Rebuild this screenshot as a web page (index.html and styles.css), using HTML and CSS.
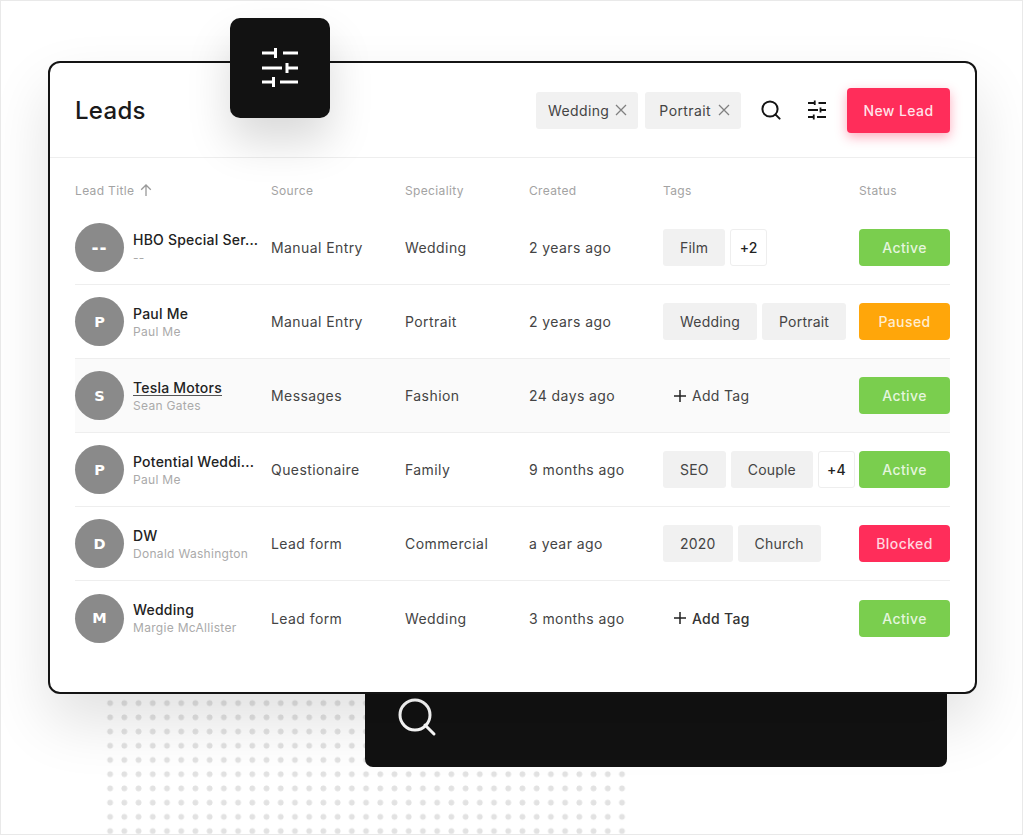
FILE: index.html
```html
<!DOCTYPE html>
<html lang="en">
<head>
  <meta charset="UTF-8" />
  <title>Leads</title>
  <link rel="stylesheet" href="styles.css">
</head>
<body>
  <div class="stage">
    <div class="dots"></div>
    <div class="search-bar">
      <svg width="40" height="40" viewBox="0 0 40 40" fill="none" stroke="#fff" stroke-width="3" stroke-linecap="round"><circle cx="17" cy="17" r="15"/><path d="M27 27l9 9"/></svg>
    </div>

    <div class="card">
      <header class="card-head">
        <h1>Leads</h1>
        <span class="chip">Wedding <svg width="12" height="12" viewBox="0 0 12 12" stroke="#808080" stroke-width="1.3"><path d="M1 1l10 10M11 1L1 11"/></svg></span>
        <span class="chip wide">Portrait <svg width="12" height="12" viewBox="0 0 12 12" stroke="#808080" stroke-width="1.3"><path d="M1 1l10 10M11 1L1 11"/></svg></span>
        <svg class="icon-search" width="20" height="20" viewBox="0 0 20 20" fill="none" stroke="#141414" stroke-width="2" stroke-linecap="round"><circle cx="9" cy="9" r="7.6"/><path d="M14.6 14.6l4 4"/></svg>
        <svg class="icon-filter" width="20" height="20" viewBox="0 0 40 40" fill="none" stroke="#141414" stroke-width="3.6"><path d="M2 6h13M23 6h15M2 20h20M27 20h11M2 34h11M20 34h18"/><path d="M15.500 1v9M27 15v10M13.500 29v10"/></svg>
        <button class="new-lead">New Lead</button>
      </header>

      <div class="table">
        <div class="row head">
          <div>Lead Title <svg class="sort" width="12" height="12" viewBox="0 0 12 12" fill="none" stroke="#999" stroke-width="1.3"><path d="M6 12V1M1.2 5.800L6 1l4.800 4.800"/></svg></div>
          <div>Source</div><div>Speciality</div><div>Created</div><div>Tags</div><div>Status</div>
        </div>

        <div class="row">
          <div class="lead"><span class="avatar dashes">--</span><div><div class="name">HBO Special Ser...</div><div class="sub">--</div></div></div>
          <div>Manual Entry</div><div>Wedding</div><div>2 years ago</div>
          <div class="tags"><span class="tag">Film</span><span class="more">+2</span></div>
          <div class="status active">Active</div>
        </div>

        <div class="row">
          <div class="lead"><span class="avatar">P</span><div><div class="name">Paul Me</div><div class="sub">Paul Me</div></div></div>
          <div>Manual Entry</div><div>Portrait</div><div>2 years ago</div>
          <div class="tags"><span class="tag">Wedding</span><span class="tag">Portrait</span></div>
          <div class="status paused">Paused</div>
        </div>

        <div class="row hovered">
          <div class="lead"><span class="avatar">S</span><div><div class="name linked">Tesla Motors</div><div class="sub">Sean Gates</div></div></div>
          <div>Messages</div><div>Fashion</div><div>24 days ago</div>
          <div class="tags"><span class="add-tag"><svg width="12" height="12" viewBox="0 0 12 12" stroke="#222" stroke-width="1.5"><path d="M6 0v12M0 6h12"/></svg>Add Tag</span></div>
          <div class="status active">Active</div>
        </div>

        <div class="row">
          <div class="lead"><span class="avatar">P</span><div><div class="name">Potential Weddi...</div><div class="sub">Paul Me</div></div></div>
          <div>Questionaire</div><div>Family</div><div>9 months ago</div>
          <div class="tags"><span class="tag">SEO</span><span class="tag">Couple</span><span class="more">+4</span></div>
          <div class="status active">Active</div>
        </div>

        <div class="row">
          <div class="lead"><span class="avatar">D</span><div><div class="name">DW</div><div class="sub">Donald Washington</div></div></div>
          <div>Lead form</div><div>Commercial</div><div>a year ago</div>
          <div class="tags"><span class="tag">2020</span><span class="tag">Church</span></div>
          <div class="status blocked">Blocked</div>
        </div>

        <div class="row last">
          <div class="lead"><span class="avatar">M</span><div><div class="name">Wedding</div><div class="sub">Margie McAllister</div></div></div>
          <div>Lead form</div><div>Wedding</div><div>3 months ago</div>
          <div class="tags"><span class="add-tag strong"><svg width="12" height="12" viewBox="0 0 12 12" stroke="#222" stroke-width="1.5"><path d="M6 0v12M0 6h12"/></svg>Add Tag</span></div>
          <div class="status active">Active</div>
        </div>
      </div>
    </div>

    <div class="tile">
      <svg width="40" height="40" viewBox="0 0 40 40" fill="none" stroke="#fff" stroke-width="3"><path d="M2 5h13M23 5h15M2 20h20M27 20h11M2 34h11M20 34h18"/><path d="M15.500 0v10M27 15v10M13.500 29v10"/></svg>
    </div>
  </div>
</body>
</html>
```

FILE: styles.css
```css
* {
  box-sizing: border-box;
}
body {
  margin: 0;
  background: #fff;
  font-family: Inter, 'Open Sans', sans-serif;
  font-size: 14px;
  letter-spacing: 0.42px;
  color: #444;
}
.stage {
  position: relative;
  width: 1023px;
  height: 835px;
  padding: 60px 0 0 47px;
  border: 1px solid #e9e9e9;
  overflow: hidden;
}
.dots {
  position: absolute;
  left: 102px;
  top: 695px;
  width: 526px;
  height: 140px;
  background-image: radial-gradient(circle, #e2e2e2 2.6px, transparent 3.2px);
  background-size: 14.22px 14.22px;
}
.search-bar {
  position: absolute;
  left: 364px;
  top: 680px;
  width: 582px;
  height: 86px;
  padding: 17px 0 0 33px;
  background: #121212;
  border-radius: 0 0 8px 8px;
}
.card {
  position: relative;
  width: 929px;
  height: 633px;
  background: #fff;
  border: 2px solid #141414;
  border-radius: 12px;
  box-shadow: 0 28px 60px rgba(0, 0, 0, 0.12);
}
.tile {
  position: absolute;
  left: 229px;
  top: 17px;
  width: 100px;
  height: 100px;
  display: flex;
  align-items: center;
  justify-content: center;
  background: #121212;
  border-radius: 10px;
  box-shadow: 0 24px 44px rgba(0, 0, 0, 0.15);
}
.card-head {
  display: flex;
  align-items: center;
  height: 95px;
  padding: 0 25px;
  border-bottom: 1px solid #eee;
}
.card-head h1 {
  margin: 0 auto 0 0;
  font-size: 24px;
  font-weight: 500;
  letter-spacing: 0.3px;
  color: #1a1a1a;
}
.chip {
  display: flex;
  align-items: center;
  gap: 6px;
  height: 37px;
  margin-left: 7px;
  padding: 0 11px 0 12px;
  background: #f1f1f1;
  border-radius: 3px;
  letter-spacing: 0.4px;
}
.chip.wide {
  gap: 7px;
  padding-left: 14px;
}
.icon-search {
  margin-left: 20px;
}
.icon-filter {
  margin-left: 26px;
}
.new-lead {
  width: 103px;
  height: 45px;
  margin-left: 20px;
  border: 0;
  border-radius: 4px;
  background: #ff2d5a;
  color: rgba(255, 255, 255, 0.88);
  font: inherit;
  letter-spacing: inherit;
  font-weight: 500;
  box-shadow: 0 4px 12px rgba(255, 45, 90, 0.4);
}
.table {
  padding: 0 25px;
}
.row {
  display: grid;
  grid-template-columns: 196px 134px 124px 134px 196px 91px;
  align-items: center;
  height: 74px;
  border-bottom: 1px solid #eee;
}
.row.head {
  align-items: end;
  height: 53px;
  padding-bottom: 13px;
  border: 0;
  font-size: 12px;
  letter-spacing: 0.35px;
  color: #a3a3a3;
}
.row.hovered {
  background: #fafafa;
}
.row.last {
  border: 0;
}
.sort {
  margin-left: 2px;
  vertical-align: -1px;
}
.lead {
  display: flex;
  align-items: center;
  gap: 9px;
}
.avatar {
  flex: none;
  display: flex;
  align-items: center;
  justify-content: center;
  width: 49px;
  height: 49px;
  border-radius: 50%;
  background: #8a8a8a;
  color: #fff;
  font-family: 'DejaVu Sans', sans-serif;
  font-size: 14.5px;
  font-weight: 700;
  letter-spacing: 0;
}
.avatar.dashes {
  font-size: 17px;
  letter-spacing: 1px;
}
.name {
  font-weight: 500;
  letter-spacing: 0.22px;
  color: #222;
  white-space: nowrap;
}
.name.linked {
  display: inline-block;
  border-bottom: 1px solid #555;
  line-height: 15px;
}
.sub {
  margin-top: 2px;
  font-size: 12px;
  letter-spacing: 0.3px;
  color: #aaa;
}
.tags {
  display: flex;
  gap: 5px;
}
.tag, .more {
  display: flex;
  align-items: center;
  height: 37px;
  border-radius: 3px;
  letter-spacing: 0.2px;
}
.tag {
  padding: 0 17px;
  background: #f1f1f1;
}
.more {
  justify-content: center;
  width: 37px;
  border: 1px solid #eee;
  background: #fff;
  font-weight: 500;
  color: #222;
}
.add-tag {
  display: flex;
  align-items: center;
  gap: 6px;
  padding-left: 11px;
  letter-spacing: 0.3px;
}
.add-tag.strong {
  font-weight: 500;
  color: #333;
}
.status {
  display: flex;
  align-items: center;
  justify-content: center;
  height: 37px;
  border-radius: 4px;
  color: rgba(255, 255, 255, 0.82);
  font-weight: 500;
}
.active {
  background: #7ace4e;
}
.paused {
  background: #ffa60a;
}
.blocked {
  background: #ff2d5a;
}
```
